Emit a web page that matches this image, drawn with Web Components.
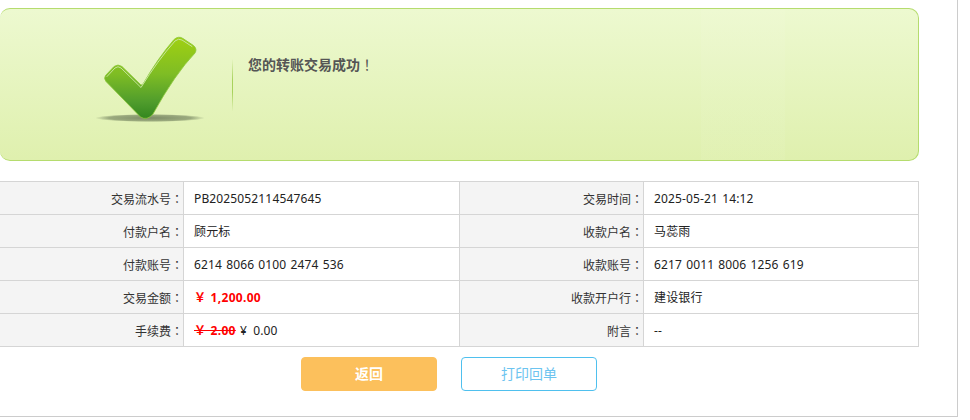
<!DOCTYPE html>
<html lang="zh-CN">
<head>
<meta charset="utf-8">
<title>转账结果</title>
<style>
  html, body { margin: 0; padding: 0; background: #fff; overflow: hidden; }
  body { font: 12px "Noto Sans", "Noto Sans CJK SC", sans-serif; color: #333; }
</style>
</head>
<body>
<receipt-page>
  <success-banner>您的转账交易成功<wide-mark>！</wide-mark></success-banner>
  <detail-table>
    <detail-cell label="交易流水号">PB2025052114547645</detail-cell>
    <detail-cell label="交易时间">2025-05-21 14:12</detail-cell>
    <detail-cell label="付款户名">顾元标</detail-cell>
    <detail-cell label="收款户名">马蕊雨</detail-cell>
    <detail-cell label="付款账号">6214 8066 0100 2474 536</detail-cell>
    <detail-cell label="收款账号">6217 0011 8006 1256 619</detail-cell>
    <detail-cell label="交易金额"><money-text red>￥ 1,200.00</money-text></detail-cell>
    <detail-cell label="收款开户行">建设银行</detail-cell>
    <detail-cell label="手续费"><money-text red strike>￥ 2.00</money-text> ¥&nbsp;&#8201;0.00</detail-cell>
    <detail-cell label="附言">--</detail-cell>
  </detail-table>
  <action-bar>
    <action-button primary>返回</action-button>
    <action-button>打印回单</action-button>
  </action-bar>
</receipt-page>

<script>
class ReceiptPage extends HTMLElement {
  constructor() {
    super()
    this.attachShadow({ mode: 'open' }).innerHTML = `
      <style>
        :host {
          display: block;
          box-sizing: border-box;
          width: 958px;
          height: 417px;
          padding-top: 8px;
          border-right: 1px solid #ccc;
          border-bottom: 1px solid #ccc;
        }
      </style>
      <slot></slot>
    `
  }
}

// the reference centres full-width punctuation in its box, the TC forms do that too
// no whitespace around the slot here, it would render as a space in the text
class WideMark extends HTMLElement {
  constructor() {
    super()
    this.attachShadow({ mode: 'open' }).innerHTML = `<style>
        :host { display: inline; font-family: "Noto Sans CJK TC", sans-serif; font-weight: normal; }
      </style><span lang="zh-TW"><slot></slot></span>`
    this.setAttribute('lang', 'zh-TW')
  }
}

class SuccessBanner extends HTMLElement {
  constructor() {
    super()
    this.attachShadow({ mode: 'open' }).innerHTML = `
      <style>
        :host {
          display: flex;
          box-sizing: border-box;
          width: 919px;
          height: 153px;
          margin-bottom: 20px;
          border: 1px solid #b5dc6e;
          border-left-width: 0;
          border-radius: 10px;
          background:
            linear-gradient(to right, transparent 701px, rgba(255,255,255,.05) 701px, rgba(255,255,255,.05) 785px, transparent 785px),
            linear-gradient(#edf9d0, #dff0ae);
        }
        svg { display: block; flex: none; }
        .divider {
          flex: none;
          width: 1px;
          height: 151px;
          background: linear-gradient(transparent 33%, #a8d25c 47%, #a8d25c 55%, transparent 68%);
        }
        .msg {
          padding: 45px 0 0 15px;
          font-size: 14px;
          line-height: 20px;
          font-weight: bold;
          color: #555;
        }
      </style>
      <svg width="232" height="151" viewBox="0 9 232 151" aria-hidden="true">
        <defs>
          <linearGradient id="tick" x1="0" y1="0" x2="0" y2="1">
            <stop offset="0" stop-color="#a0d012"/>
            <stop offset="0.45" stop-color="#7fbd24"/>
            <stop offset="0.8" stop-color="#4f9c2c"/>
            <stop offset="1" stop-color="#33861f"/>
          </linearGradient>
          <radialGradient id="shade">
            <stop offset="0" stop-color="#6b7a58" stop-opacity=".85"/>
            <stop offset="0.75" stop-color="#6b7a58" stop-opacity=".6"/>
            <stop offset="1" stop-color="#6b7a58" stop-opacity="0"/>
          </radialGradient>
        </defs>
        <ellipse cx="150" cy="118" rx="55" ry="4" fill="url(#shade)"/>
        <path d="M105.500 75.500 L114 66.500 Q118 63.500 122 66.500 L140.500 84.500 Q142 85.500 143 84 Q158 58 174 39.500 Q178.500 35.500 183 38.500 L193.500 45.500 Q197.500 49 195 53 Q175 74 153 114 Q147 121 140.500 117 L106 81.500 Q103.500 78.500 105.500 75.500 Z" fill="url(#tick)" stroke="#8cc63a" stroke-width=".8"/>
        <path d="M107 76.500 L115 68 Q118 65.500 121 68 L141 87.500 Q158 60 175 41 Q178.500 38 182 40 L192 46.500" fill="none" stroke="#c6e59c" stroke-width="1" stroke-linecap="round"/>
      </svg>
      <div class="divider"></div>
      <div class="msg"><slot></slot></div>
    `
  }
}

class DetailTable extends HTMLElement {
  constructor() {
    super()
    this.attachShadow({ mode: 'open' }).innerHTML = `
      <style>
        :host {
          display: grid;
          grid-template-columns: 460px 459px;
          grid-auto-rows: 33px;
          width: 919px;
          border-top: 1px solid #d5d5d5;
        }
      </style>
      <slot></slot>
    `
  }
}

class DetailCell extends HTMLElement {
  constructor() {
    super()
    this.attachShadow({ mode: 'open' }).innerHTML = `
      <style>
        :host {
          display: grid;
          grid-template-columns: 184px 1fr;
          line-height: 34px;
          color: #222;
        }
        div {
          box-sizing: border-box;
          height: 33px;
          border-right: 1px solid #d5d5d5;
          border-bottom: 1px solid #d5d5d5;
          white-space: nowrap;
        }
        .label { background: #f4f4f4; text-align: right; color: #333; }
        .value { padding-left: 10px; letter-spacing: .14px; word-spacing: .9px; }
      </style>
      <div class="label"><span id="label"></span><wide-mark>：</wide-mark></div>
      <div class="value"><slot></slot></div>
    `
  }

  connectedCallback() {
    this.shadowRoot.getElementById('label').textContent = this.getAttribute('label')
  }
}

class MoneyText extends HTMLElement {
  constructor() {
    super()
    this.attachShadow({ mode: 'open' }).innerHTML = `<style>
        :host { display: inline; }
        :host([red]) { color: #f00; font-weight: bold; letter-spacing: .3px; }
        :host([strike]) { text-decoration: line-through; }
      </style><slot></slot>`
  }
}

class ActionBar extends HTMLElement {
  constructor() {
    super()
    this.attachShadow({ mode: 'open' }).innerHTML = `
      <style>
        :host {
          display: flex;
          justify-content: center;
          gap: 24px;
          width: 898px;
          margin-top: 10px;
        }
      </style>
      <slot></slot>
    `
  }
}

class ActionButton extends HTMLElement {
  constructor() {
    super()
    this.attachShadow({ mode: 'open' }).innerHTML = `
      <style>
        :host {
          display: block;
          box-sizing: border-box;
          width: 136px;
          height: 34px;
          border: 1px solid #4fc0ee;
          border-radius: 4px;
          font-size: 14px;
          line-height: 32px;
          text-align: center;
          color: #6cc4f0;
        }
        :host([primary]) {
          border-color: #fcc05c;
          background: #fcc05c;
          color: #fff;
          font-weight: bold;
        }
      </style>
      <slot></slot>
    `
  }
}

customElements.define('receipt-page', ReceiptPage);
customElements.define('wide-mark', WideMark);
customElements.define('success-banner', SuccessBanner);
customElements.define('detail-table', DetailTable);
customElements.define('detail-cell', DetailCell);
customElements.define('money-text', MoneyText);
customElements.define('action-bar', ActionBar);
customElements.define('action-button', ActionButton);
</script>
</body>
</html>
